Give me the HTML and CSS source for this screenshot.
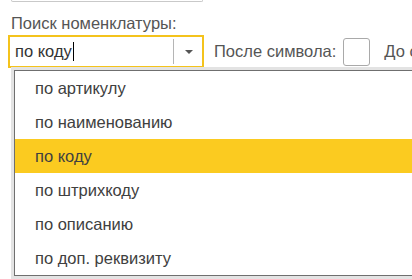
FILE: index.html
```html
<!DOCTYPE html>
<html lang="ru">
<head>
<meta charset="UTF-8">
<meta name="viewport" content="width=device-width, initial-scale=1.0">
<title>Поиск номенклатуры</title>
<link rel="stylesheet" href="styles.css">
</head>
<body>

<div class="form">
    <!-- край поля выше -->
    <div class="prev-field"></div>

    <div class="field-label">Поиск номенклатуры:</div>

    <div class="search-row">
        <div class="combo">
            <span class="combo-text">по коду</span><span class="caret"></span>
            <span class="combo-btn"><span class="arrow"></span></span>
        </div>
        <span class="after-label">После символа:</span>
        <span class="char-box"></span>
        <span class="before-label">До символа:</span>
    </div>

    <!-- Выпадающий список -->
    <div class="dropdown">
        <div class="dropdown-item">по артикулу</div>
        <div class="dropdown-item">по наименованию</div>
        <div class="dropdown-item selected">по коду</div>
        <div class="dropdown-item">по штрихкоду</div>
        <div class="dropdown-item">по описанию</div>
        <div class="dropdown-item">по доп. реквизиту</div>
    </div>
</div>

</body>
</html>
```

FILE: styles.css
```css
body {
    font-family: "Liberation Sans", Arial, sans-serif;
    font-size: 16.5px;
    color: #444;
    margin: 0;
    background-color: white;
    overflow: hidden;
}

.form {
    position: relative;
    height: 279px;
    overflow: hidden;
}

.prev-field {
    width: 190px;
    height: 1px;
    margin-left: 11px;
    border: 1px solid #c9c9c9;
    border-top: none;
    border-radius: 0 0 3px 3px;
}

.field-label {
    margin: 12px 0 0 11px;
    line-height: 19px;
    color: #555;
}

.search-row {
    display: flex;
    align-items: center;
    margin: 2px 0 0 8px;
    white-space: nowrap;
}

.combo {
    display: flex;
    align-items: center;
    width: 196px;
    height: 33px;
    box-sizing: border-box;
    border: 2px solid #f4c31c;
    flex-shrink: 0;
}

.combo-text {
    padding-left: 5px;
    color: #333;
}

.caret {
    width: 1px;
    height: 19px;
    margin-left: 1px;
    background-color: #000;
}

.combo-btn {
    display: flex;
    align-items: center;
    justify-content: center;
    margin-left: auto;
    width: 28px;
    height: 25px;
    border-left: 1px solid #b5b5b5;
}

.arrow {
    width: 0;
    height: 0;
    border-left: 4px solid transparent;
    border-right: 4px solid transparent;
    border-top: 4px solid #555;
    margin-left: 1px;
}

.after-label {
    margin-left: 10px;
    color: #555;
}

.char-box {
    width: 27px;
    height: 28px;
    box-sizing: border-box;
    margin-left: 7px;
    border: 1px solid #a9a9a9;
    border-radius: 3px;
    flex-shrink: 0;
}

.before-label {
    margin-left: 14px;
    color: #555;
}

/* Dropdown list */
.dropdown {
    position: absolute;
    left: 14px;
    top: 70px;
    width: 420px;
    background-color: white;
    border: 1px solid #6f6f6f;
    box-shadow: 0 0 0 3px #e3e3e3;
}

.dropdown-item {
    height: 34px;
    line-height: 34px;
    padding-left: 20px;
    color: #404040;
}

.dropdown-item.selected {
    background-color: #fbcb20;
}
```
